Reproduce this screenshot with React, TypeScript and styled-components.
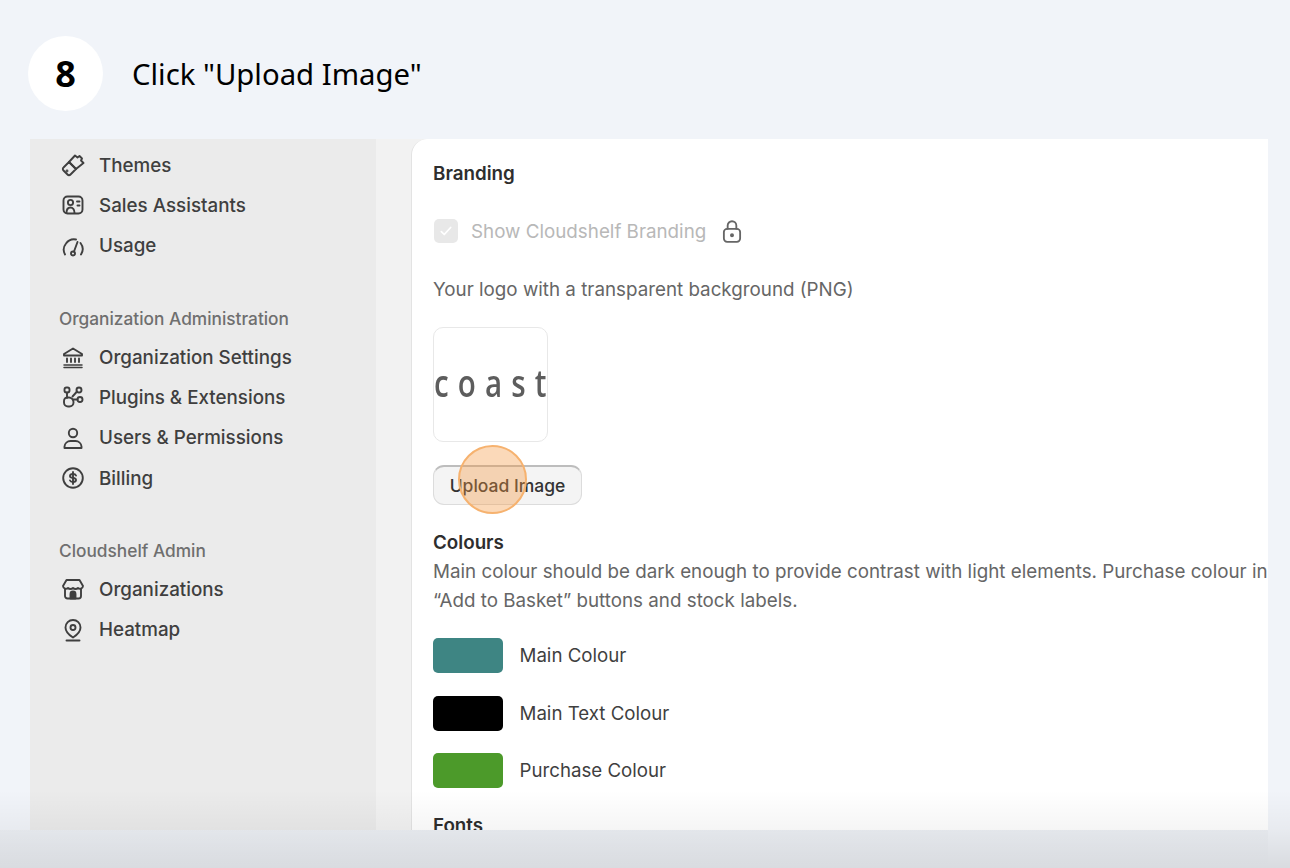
import React from 'react';
import styled, { createGlobalStyle } from 'styled-components';

const GlobalStyle = createGlobalStyle`
  html, body {
    margin: 0;
    padding: 0;
    height: 868px;
    overflow: hidden;
    background: #f1f4f9;
    font-family: Inter, "Liberation Sans", sans-serif;
  }
  * { box-sizing: border-box; }
`;

const Page = styled.div`
  position: relative;
  width: 1290px;
  height: 868px;
  overflow: hidden;
  background: #f1f4f9;
`;

const StepHeader = styled.header`
  height: 139px;
  padding: 36px 0 0 28px;
  display: flex;
  align-items: flex-start;
  gap: 29px;
`;

const StepBadge = styled.div`
  width: 75px;
  height: 75px;
  border-radius: 50%;
  background: #fff;
  color: #000;
  font-family: "Noto Sans", sans-serif;
  font-size: 36px;
  font-weight: 700;
  display: flex;
  align-items: center;
  justify-content: center;
`;

const StepTitle = styled.h1`
  margin: 0;
  height: 75px;
  display: flex;
  align-items: center;
  font-family: "Noto Sans", sans-serif;
  font-size: 29.3px;
  font-weight: 400;
  color: #000;
`;

const Shot = styled.div`
  margin-left: 30px;
  width: 1238px;
  height: 691px;
  overflow: hidden;
  display: flex;
  background: #f2f2f2;
`;

const Sidebar = styled.aside`
  width: 346px;
  flex-shrink: 0;
  background: #ebebeb;
  padding: 6px 0 0 29px;
`;

const NavGroup = styled.div`
  margin-bottom: 42.1px;
`;

const GroupLabel = styled.div`
  height: 22px;
  margin-bottom: 7px;
  line-height: 22px;
  font-size: 17.3px;
  font-weight: 500;
  color: #6f6f6f;
`;

const NavRow = styled.div`
  height: 40.3px;
  display: flex;
  align-items: center;
  gap: 14px;
  padding-left: 2px;
  font-size: 18.8px;
  font-weight: 500;
  color: #3f3f3f;
`;

const Icon = styled.svg`
  width: 24px;
  height: 24px;
  flex-shrink: 0;
  fill: none;
  stroke: currentColor;
  stroke-width: 1.9;
  stroke-linecap: round;
  stroke-linejoin: round;
`;

const Card = styled.main`
  margin-left: 35px;
  flex: 1;
  min-width: 0;
  background: #fff;
  border-left: 1.5px solid #e3e3e3;
  border-top-left-radius: 16px;
  padding: 23px 0 0 21px;
  overflow: hidden;
`;

const SectionTitle = styled.h2`
  margin: 0;
  height: 24px;
  line-height: 24px;
  font-size: 18.8px;
  font-weight: 600;
  color: #2e2e2e;
`;

const LockedRow = styled.div`
  margin-top: 33px;
  height: 24px;
  display: flex;
  align-items: center;
  font-size: 18.8px;
  color: #b8b8b8;
`;

const DisabledCheck = styled.span`
  width: 24px;
  height: 24px;
  margin: 0 13px 0 1px;
  border-radius: 5px;
  background: #e8e8e8;
  display: flex;
  align-items: center;
  justify-content: center;
`;

const LockIcon = styled(Icon)`
  margin-left: 13px;
  color: #666;
  width: 26px;
  height: 26px;
  stroke-width: 1.7;
`;

const BodyText = styled.p`
  margin: 0;
  font-size: 18.8px;
  line-height: 29px;
  color: #666;
  white-space: nowrap;
`;

const LogoHint = styled(BodyText)`
  margin-top: 32px;
`;

const Description = styled(BodyText)`
  margin-top: 2px;
`;

const LogoBox = styled.div`
  margin-top: 23px;
  width: 115px;
  height: 115px;
  padding-bottom: 4px;
  border: 1px solid #e8e8e8;
  border-radius: 10px;
  display: flex;
  align-items: center;
  overflow: hidden;
`;

const LogoWord = styled.span`
  font-family: "Open Sans", sans-serif;
  font-size: 37px;
  font-weight: 600;
  letter-spacing: 11.4px;
  transform: scaleX(0.8);
  transform-origin: left center;
  color: #5d5d5d;
  white-space: nowrap;
  filter: blur(0.4px);
`;

const UploadButton = styled.button`
  display: block;
  margin-top: 23px;
  width: 149px;
  height: 40px;
  padding: 0;
  border: 1.5px solid #dcdcdc;
  border-top: 2px solid #bdbdbd;
  border-radius: 11px;
  background: #f4f4f4;
  font-family: inherit;
  font-size: 17.5px;
  font-weight: 500;
  color: #333;
`;

const ColoursTitle = styled(SectionTitle)`
  margin-top: 26px;
`;

const ColourRows = styled.div`
  margin-top: 23px;
  display: flex;
  flex-direction: column;
  gap: 22.6px;
`;

const ColourRow = styled.div`
  height: 35px;
  display: flex;
  align-items: center;
  gap: 16.5px;
  font-size: 18.7px;
  color: #3f3f3f;
`;

const Swatch = styled.span<{ $color: string }>`
  width: 70px;
  height: 35px;
  border-radius: 5px;
  background: ${props => props.$color};
`;

const FontsTitle = styled(SectionTitle)`
  margin-top: 26px;
`;

const ClickMarker = styled.div`
  position: absolute;
  left: 458px;
  top: 445px;
  width: 69px;
  height: 69px;
  border-radius: 50%;
  border: 2.5px solid #f6b26f;
  background: rgba(243, 150, 60, 0.36);
`;

const BottomFade = styled.div`
  position: absolute;
  left: 0;
  right: 0;
  bottom: 0;
  height: 78px;
  pointer-events: none;
  background: linear-gradient(to bottom, rgba(0, 0, 0, 0), rgba(0, 0, 0, 0.04) 51%, rgba(0, 0, 0, 0.1));
`;

const BottomBar = styled.div`
  position: absolute;
  left: 0;
  right: 22px;
  bottom: 0;
  height: 38px;
  pointer-events: none;
  background: linear-gradient(to bottom, rgba(0, 0, 0, 0.02), rgba(0, 0, 0, 0));
`;

const glyphs: Record<string, React.ReactNode> = {
  themes: (
    <>
      <path d="M8 9 14 2.500l2.500 2 2-1.500L21 5.500l-1 2 2.500 2.500-7.500 6z" />
      <path d="M8 9l7 7-5.500 5.500a2 2 0 0 1-3 0l-4-4a2 2 0 0 1 0-3z" />
      <circle cx="6" cy="18" r="0.500" />
    </>
  ),
  assistants: (
    <>
      <rect x="2.500" y="3.500" width="19" height="17" rx="4" />
      <circle cx="9.500" cy="9.500" r="2.600" />
      <path d="M5.500 20c0-3.500 1.800-5.500 4-5.500s4 2 4 5.500" />
      <path d="M16 8.500h2.500M16.500 12.500h2" />
    </>
  ),
  usage: (
    <>
      <path d="M4 20.500a10 10 0 0 1 1-11A10 10 0 0 1 15 5.500" />
      <path d="M19.500 9a10 10 0 0 1 .5 11.500" />
      <circle cx="12" cy="19.500" r="2" />
      <path d="M13 17.500 16.500 8" />
    </>
  ),
  organization: (
    <>
      <path d="M3 9 12 3.500 21 9v1.500H3z" />
      <path d="M6 13.500V17M10 13.500V17M14 13.500V17M18 13.500V17" />
      <path d="M3 20h18M3 22.500h18" strokeWidth="1.500" />
    </>
  ),
  plugins: (
    <>
      <rect x="3.500" y="2.500" width="5" height="5" rx="2" />
      <circle cx="18" cy="5" r="2.500" />
      <circle cx="19" cy="14.500" r="2.500" />
      <path d="M6 7.500v5.500" />
      <path d="M16 6.500l-4.500 5M12 14.500h4.500" />
      <path d="M7.500 12.500H8a4.500 4.500 0 0 1 4.500 4.500v.5a4 4 0 0 1-4 4H7a4 4 0 0 1-4-4V16a3.500 3.500 0 0 1 4.500-3.500z" />
    </>
  ),
  users: (
    <>
      <circle cx="12" cy="7" r="4.200" />
      <path d="M3.500 22v-1.500a6 6 0 0 1 6-5.500h5a6 6 0 0 1 6 5.500V22z" />
    </>
  ),
  billing: (
    <>
      <circle cx="12" cy="12" r="9.800" />
      <path d="M15 9.500C14.600 8.500 13.500 8 12 8c-1.800 0-3 .9-3 2s1 1.800 3 2 3 .9 3 2-1.200 2-3 2c-1.500 0-2.600-.5-3-1.500" />
      <path d="M12 6v12" />
    </>
  ),
  store: (
    <>
      <path d="M5.500 3h13L22 9a3 3 0 0 1-5 2 3.500 3.500 0 0 1-5 0 3.500 3.500 0 0 1-5 0 3 3 0 0 1-5-2z" />
      <path d="M4 12v7a2.500 2.500 0 0 0 2.500 2.500h11A2.500 2.500 0 0 0 20 19v-7" />
      <path d="M9.500 21.500V17a2.500 2.500 0 0 1 5 0v4.500z" fill="currentColor" />
    </>
  ),
  heatmap: (
    <>
      <path d="M12 2a7.500 7.500 0 0 0-7.500 7.500c0 4 3.500 7.500 7.500 10 4-2.500 7.500-6 7.500-10A7.500 7.500 0 0 0 12 2z" />
      <circle cx="12" cy="9.500" r="2.500" />
      <path d="M5.500 22.500h13" />
    </>
  ),
};

const NavItem: React.FC<{ icon: string; label: string }> = ({ icon, label }) => (
  <NavRow>
    <Icon viewBox="0 0 24 24">{glyphs[icon]}</Icon>
    {label}
  </NavRow>
);

const colours = [
  { label: 'Main Colour', color: '#3e8583' },
  { label: 'Main Text Colour', color: '#000000' },
  { label: 'Purchase Colour', color: '#4c9a2a' },
];

const App: React.FC = () => {
  return (
    <Page>
      <GlobalStyle />
      <StepHeader>
        <StepBadge>8</StepBadge>
        <StepTitle>Click "Upload Image"</StepTitle>
      </StepHeader>
      <Shot>
        <Sidebar>
          <NavGroup>
            <NavItem icon="themes" label="Themes" />
            <NavItem icon="assistants" label="Sales Assistants" />
            <NavItem icon="usage" label="Usage" />
          </NavGroup>
          <NavGroup>
            <GroupLabel>Organization Administration</GroupLabel>
            <NavItem icon="organization" label="Organization Settings" />
            <NavItem icon="plugins" label="Plugins &amp; Extensions" />
            <NavItem icon="users" label="Users &amp; Permissions" />
            <NavItem icon="billing" label="Billing" />
          </NavGroup>
          <NavGroup>
            <GroupLabel>Cloudshelf Admin</GroupLabel>
            <NavItem icon="store" label="Organizations" />
            <NavItem icon="heatmap" label="Heatmap" />
          </NavGroup>
        </Sidebar>
        <Card>
          <SectionTitle>Branding</SectionTitle>
          <LockedRow>
            <DisabledCheck>
              <svg width="14" height="14" viewBox="0 0 24 24" fill="none" stroke="#fff" strokeWidth="3" strokeLinecap="round" strokeLinejoin="round">
                <path d="M4 13l5 5L20 6" />
              </svg>
            </DisabledCheck>
            Show Cloudshelf Branding
            <LockIcon viewBox="0 0 24 24">
              <rect x="4.500" y="10" width="15" height="12" rx="3" />
              <path d="M8 10V7a4 4 0 0 1 8 0v3" />
              <circle cx="12" cy="16" r="1" fill="currentColor" />
            </LockIcon>
          </LockedRow>
          <LogoHint>Your logo with a transparent background (PNG)</LogoHint>
          <LogoBox>
            <LogoWord>coast</LogoWord>
          </LogoBox>
          <UploadButton>Upload Image</UploadButton>
          <ColoursTitle>Colours</ColoursTitle>
          <Description>
            Main colour should be dark enough to provide contrast with light elements. Purchase colour in
            <br />
            “Add to Basket” buttons and stock labels.
          </Description>
          <ColourRows>
            {colours.map(c => (
              <ColourRow key={c.label}>
                <Swatch $color={c.color} />
                {c.label}
              </ColourRow>
            ))}
          </ColourRows>
          <FontsTitle>Fonts</FontsTitle>
        </Card>
      </Shot>
      <ClickMarker />
      <BottomBar />
      <BottomFade />
    </Page>
  );
};

export default App;
